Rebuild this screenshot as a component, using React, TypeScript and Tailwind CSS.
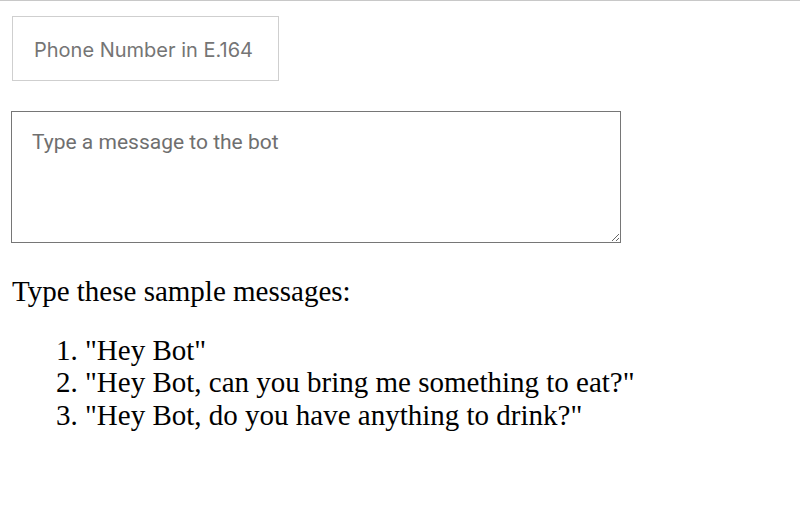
export default function App() {
  return (
    <div className="min-h-[509px] w-full border-t border-[#c8c8c8] bg-white">
      <div className="px-3 pt-[15px]">
        <input
          type="text"
          placeholder="Phone Number in E.164"
          className="block h-[65px] w-[267px] border border-[#cfcfcf] px-[21px] pt-[2px] text-[20px] text-[#333] placeholder:text-[#757575] outline-none"
          style={{ fontFamily: 'Inter, "Liberation Sans", sans-serif' }}
        />
        <textarea
          placeholder="Type a message to the bot"
          className="mt-[30px] -ml-px block h-[132px] w-[610px] border border-[#767676] px-[20px] pt-[18px] text-[21px] leading-[25px] text-[#333] placeholder:text-[#6f6f6f] outline-none"
          style={{ fontFamily: 'Roboto, "Liberation Sans", sans-serif' }}
        />
        <div
          className="mt-[32px] text-[29px] leading-[32.5px] text-black"
          style={{ fontFamily: '"Liberation Serif", "Times New Roman", serif' }}
        >
          <p>Type these sample messages:</p>
          <ol className="mt-[26px] list-decimal pl-[73px]">
            <li>"Hey Bot"</li>
            <li>"Hey Bot, can you bring me something to eat?"</li>
            <li>"Hey Bot, do you have anything to drink?"</li>
          </ol>
        </div>
      </div>
    </div>
  );
}
